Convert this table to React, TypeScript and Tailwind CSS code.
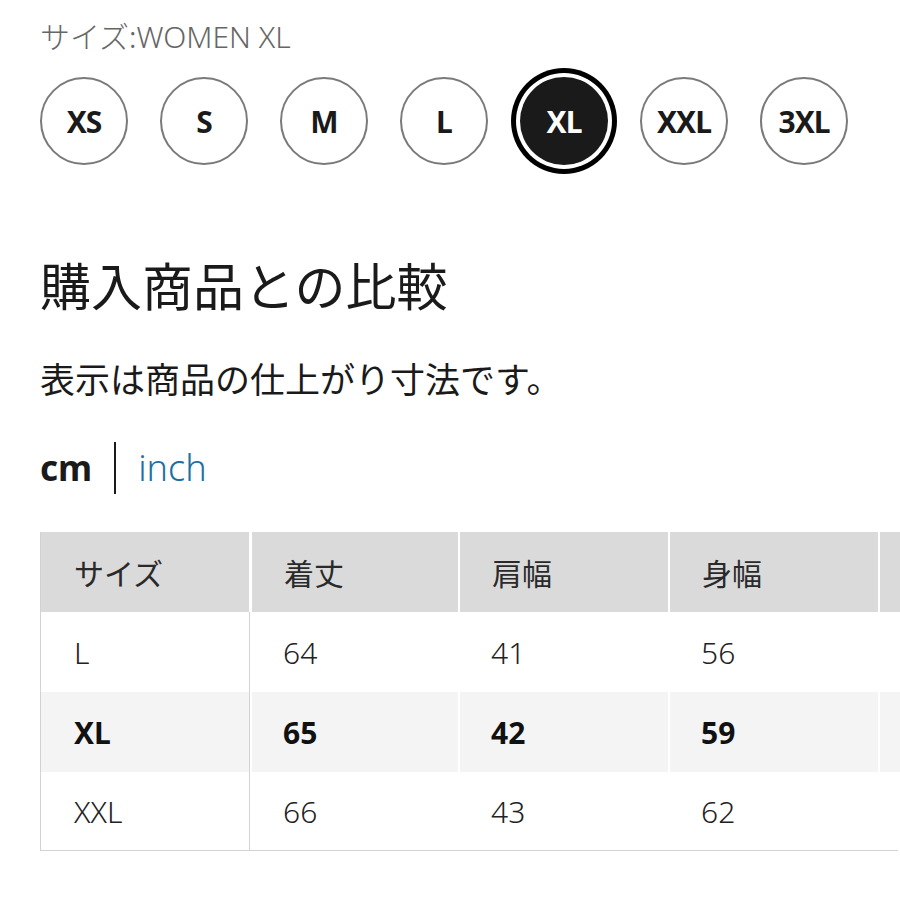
import React from "react";

const sizes = ["XS", "S", "M", "L", "XL", "XXL", "3XL"];

const rows = [
  { s: "L", v: ["64", "41", "56"], bold: false },
  { s: "XL", v: ["65", "42", "59"], bold: true },
  { s: "XXL", v: ["66", "43", "62"], bold: false },
];

const jp = { fontFamily: '"Noto Sans CJK JP", "Noto Sans", sans-serif' };
const lat = { fontFamily: '"Noto Sans", "Noto Sans CJK JP", sans-serif' };

export default function App() {
  return (
    <div className="w-[900px] h-[900px] bg-white overflow-hidden text-[#1a1a1a]" style={jp}>
      <div className="pl-[40px] pt-[16px]">
        <div className="text-[30px] leading-[38px] font-light text-[#666]">
          サイズ:<span style={lat} className="font-light">WOMEN XL</span>
        </div>
        <div className="flex items-center gap-[32px] mt-[21px] h-[88px]">
          {sizes.map((s) =>
            s === "XL" ? (
              <div
                key={s}
                className="w-[88px] h-[88px] shrink-0 rounded-full bg-[#1a1a1a] text-white flex items-center justify-center ring-[5px] ring-black ring-offset-[4px] ring-offset-white text-[30px] font-bold tracking-[-1px]"
                style={lat}
              >
                {s}
              </div>
            ) : (
              <div
                key={s}
                className="w-[88px] h-[88px] shrink-0 rounded-full border-2 border-[#7a7a7a] flex items-center justify-center text-[30px] font-bold tracking-[-1px] text-[#1a1a1a]"
                style={lat}
              >
                {s}
              </div>
            )
          )}
        </div>
        <div className="mt-[87px] text-[51px] leading-[64px] text-[#1a1a1a]">購入商品との比較</div>
        <div className="mt-[39px] text-[35px] leading-[46px] text-[#1a1a1a]">表示は商品の仕上がり寸法です。</div>
        <div className="mt-[41px] flex items-center h-[52px]" style={lat}>
          <span className="text-[35px] font-bold text-[#1a1a1a]">cm</span>
          <span className="ml-[22px] mr-[22px] w-[2px] h-[52px] bg-[#1a1a1a]" />
          <span className="text-[36px] font-light text-[#1d6fa5]">inch</span>
        </div>
      </div>
      <div className="ml-[40px] mt-[38px] w-[858px] border-l border-r border-b border-[#d2d2d2] text-[30px]">
        <div className="grid grid-cols-[209px_206px_208px_208px_208px] gap-x-[2px] h-[80px] bg-white">
          {["サイズ", "着丈", "肩幅", "身幅", ""].map((h, i) => (
            <div
              key={i}
              className={`bg-[#dadada] flex items-center text-[#2a2a2a] ${i === 0 ? "pl-[33px] mr-[1px]" : "pl-[32px]"}`}
            >
              {h}
            </div>
          ))}
        </div>
        {rows.map((r, ri) => (
          <div
            key={ri}
            className={`grid grid-cols-[209px_206px_208px_208px_208px] gap-x-[2px] ${ri === 2 ? "h-[78px]" : "h-[80px]"}`}
            style={lat}
          >
            {[r.s, ...r.v, ""].map((c, ci) => (
              <div
                key={ci}
                className={`flex items-center ${r.bold ? "bg-[#f4f4f4] font-bold text-[#111]" : "bg-white font-light text-[#222]"} ${
                  ci === 0 ? "pl-[33px] border-r border-[#d2d2d2]" : "pl-[31px]"
                }`}
              >
                {c}
              </div>
            ))}
          </div>
        ))}
      </div>
    </div>
  );
}
